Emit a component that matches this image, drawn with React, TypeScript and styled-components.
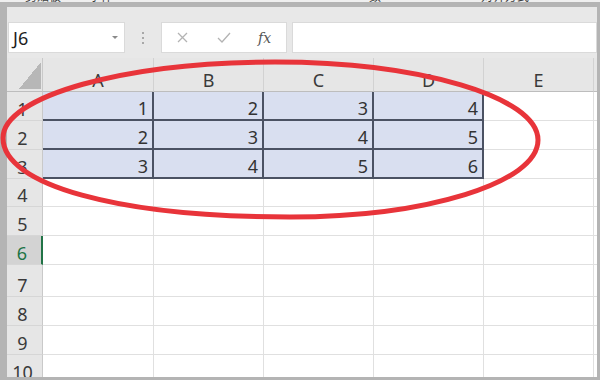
import styled, { createGlobalStyle } from "styled-components";

const GlobalStyle = createGlobalStyle`
  html, body {
    margin: 0;
    padding: 0;
    background: #b4b4b4;
  }
  body {
    font-family: "Noto Sans", "Noto Sans CJK SC", sans-serif;
  }
`;

const Screen = styled.div`
  position: relative;
  width: 600px;
  height: 380px;
  overflow: hidden;
  background: #b4b4b4;
  display: flex;
  flex-direction: column;
`;

const RibbonEdge = styled.div`
  height: 2px;
  flex-shrink: 0;
  background: #efefef;
  overflow: hidden;
  display: flex;
  align-items: flex-end;
  margin-bottom: 5px;
`;

const RibbonLabel = styled.span<{ $gap: number }>`
  margin-left: ${(p) => p.$gap}px;
  font-family: "Noto Sans CJK SC", sans-serif;
  font-size: 12px;
  line-height: 12px;
  color: #3c3c3c;
  white-space: nowrap;
`;

const Workbook = styled.div`
  flex: 1;
  min-height: 0;
  margin: 0 3px 3px 7px;
  background: #e8e8e8;
  display: flex;
  flex-direction: column;
  overflow: hidden;
`;

const FormulaBar = styled.div`
  display: flex;
  height: 31px;
  flex-shrink: 0;
  margin-top: 15px;
  padding-left: 1px;
`;

const NameBox = styled.div`
  width: 117px;
  box-sizing: border-box;
  background: #fff;
  border: 1px solid #dadada;
  display: flex;
  align-items: center;
  justify-content: space-between;
  padding: 0 6px 0 4px;
  font-size: 18px;
  color: #1e1e1e;
`;

const Caret = styled.span`
  width: 0;
  height: 0;
  border-left: 3px solid transparent;
  border-right: 3px solid transparent;
  border-top: 3px solid #8a8a8a;
`;

const Grip = styled.div`
  width: 36px;
  display: flex;
  flex-direction: column;
  align-items: center;
  justify-content: center;
  gap: 3px;
`;

const GripDot = styled.span`
  width: 2px;
  height: 2px;
  background: #a8a8a8;
`;

const ControlBox = styled.div`
  width: 126px;
  box-sizing: border-box;
  background: #fff;
  border: 1px solid #dadada;
  display: flex;
  align-items: center;
  padding-left: 15px;
  gap: 29px;
`;

const Fx = styled.span`
  font-family: "DejaVu Serif", "Liberation Serif", serif;
  font-style: italic;
  font-size: 14px;
  color: #555;
  margin-left: -2px;
`;

const FormulaInput = styled.div`
  flex: 1;
  margin-left: 5px;
  background: #fff;
  border: 1px solid #dadada;
`;

const Sheet = styled.div`
  margin-top: 5px;
  display: grid;
  grid-template-columns: 36px 111px 110px 110px 110px 110px 1fr;
  grid-template-rows: 34px 29px 29px 29px 28px 29px 29px 32px 29px 29px 29px;
  font-size: 18px;
  line-height: 22px;
`;

const Corner = styled.div`
  background: #e6e6e6;
  border-right: 1px solid #c9c9c9;
  border-bottom: 1px solid #bdbdbd;
  display: flex;
  justify-content: flex-end;
  align-items: flex-end;
  padding: 0 1px 2px 0;
`;

const CornerMark = styled.div`
  width: 22px;
  height: 27px;
  background: linear-gradient(to bottom right, transparent 50%, #b7b7b7 50%);
`;

const ColHead = styled.div`
  background: #e6e6e6;
  border-right: 1px solid #d2d2d2;
  border-bottom: 1px solid #bdbdbd;
  display: flex;
  align-items: flex-end;
  justify-content: center;
  color: #3a3a3a;
`;

const RowHead = styled.div<{ $active?: boolean }>`
  background: ${(p) => (p.$active ? "#d3d3d3" : "#e6e6e6")};
  color: ${(p) => (p.$active ? "#217346" : "#3a3a3a")};
  border-right: ${(p) => (p.$active ? "2px solid #217346" : "1px solid #c9c9c9")};
  border-bottom: 1px solid #d6d6d6;
  display: flex;
  align-items: flex-end;
  justify-content: center;
  padding-right: 4px;
`;

const Cell = styled.div<{ $filled?: boolean }>`
  background: ${(p) => (p.$filled ? "#d9dff0" : "#fff")};
  border-right: ${(p) => (p.$filled ? "2px solid #4b5263" : "1px solid #e0e0e0")};
  border-bottom: ${(p) => (p.$filled ? "2px solid #4b5263" : "1px solid #e0e0e0")};
  display: flex;
  align-items: flex-end;
  justify-content: flex-end;
  padding-right: 4px;
  color: #333;
`;

const Markup = styled.svg`
  position: absolute;
  left: 0;
  top: 0;
  pointer-events: none;
`;

const columns = ["A", "B", "C", "D", "E"];
const data = [
  [1, 2, 3, 4],
  [2, 3, 4, 5],
  [3, 4, 5, 6],
];
const rowCount = 10;
const activeRow = 6;

// hand-drawn looking loop around A1:D3
const loop =
  "M 3 138 C 3 96, 125 62, 275 62 C 420 62, 538 97, 538 140 " +
  "C 538 183, 426 217, 290 217 C 118 217, 3 185, 3 138 Z";

function App() {
  return (
    <Screen>
      <GlobalStyle />
      <RibbonEdge>
        <RibbonLabel $gap={25}>剪贴板</RibbonLabel>
        <RibbonLabel $gap={28}>字体</RibbonLabel>
        <RibbonLabel $gap={256}>数</RibbonLabel>
        <RibbonLabel $gap={100}>对齐方式</RibbonLabel>
      </RibbonEdge>
      <Workbook>
        <FormulaBar>
          <NameBox>
            J6
            <Caret />
          </NameBox>
          <Grip>
            <GripDot />
            <GripDot />
            <GripDot />
          </Grip>
          <ControlBox>
            <svg width="11" height="11" viewBox="0 0 11 11">
              <path d="M1 1 L10 10 M10 1 L1 10" stroke="#b3b3b3" strokeWidth="1.3" fill="none" />
            </svg>
            <svg width="14" height="11" viewBox="0 0 14 11">
              <path d="M1 6 L5 10 L13 1" stroke="#b3b3b3" strokeWidth="1.3" fill="none" />
            </svg>
            <Fx>fx</Fx>
          </ControlBox>
          <FormulaInput />
        </FormulaBar>

        <Sheet>
          <Corner>
            <CornerMark />
          </Corner>
          {columns.map((c) => (
            <ColHead key={c}>{c}</ColHead>
          ))}
          <ColHead />
          {Array.from({ length: rowCount }, (_, r) => (
            <Row key={r} index={r} />
          ))}
        </Sheet>
      </Workbook>

      <Markup width="600" height="380" viewBox="0 0 600 380">
        <path d={loop} fill="none" stroke="#e8343a" strokeWidth="5" />
      </Markup>
    </Screen>
  );
}

function Row({ index }: { index: number }) {
  const values = data[index];
  return (
    <>
      <RowHead $active={index + 1 === activeRow}>{index + 1}</RowHead>
      {columns.map((c, ci) => {
        const v = values && ci < values.length ? values[ci] : undefined;
        return (
          <Cell key={c} $filled={v !== undefined}>
            {v}
          </Cell>
        );
      })}
      <Cell />
    </>
  );
}

export default App;
